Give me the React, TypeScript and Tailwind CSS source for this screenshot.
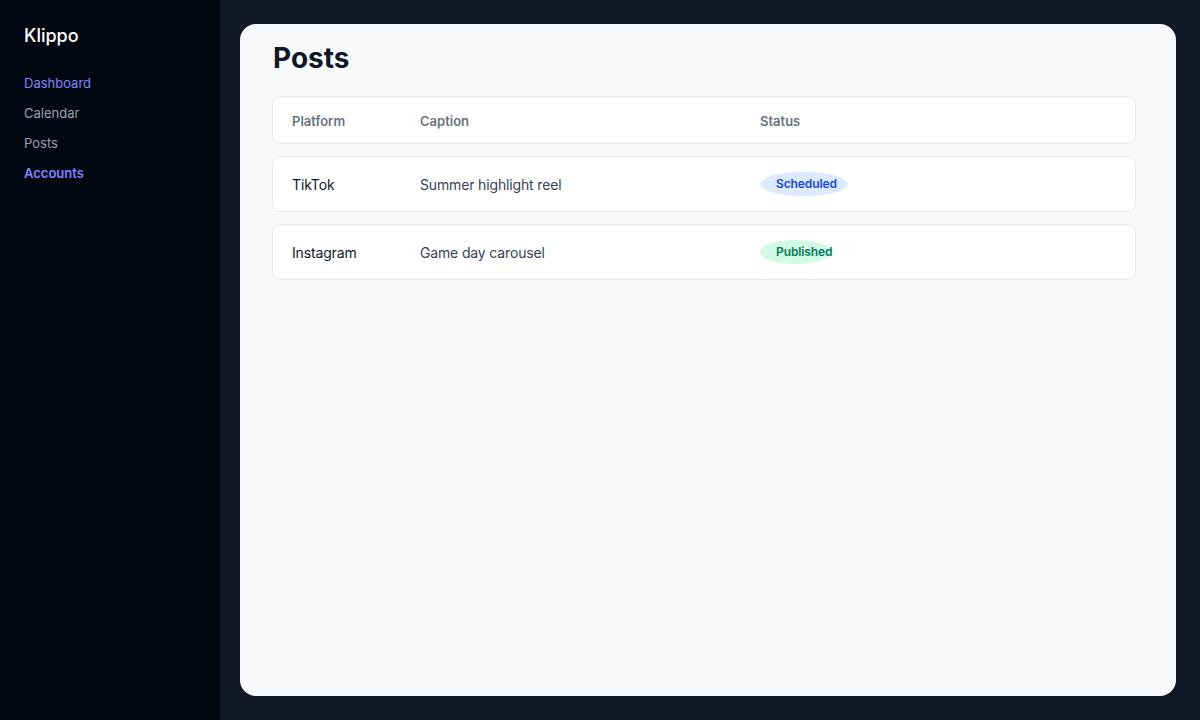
import React from "react";

interface Post {
  id: number;
  platform: string;
  caption: string;
  status: "Scheduled" | "Published";
}

const posts: Post[] = [
  { id: 1, platform: "TikTok", caption: "Summer highlight reel", status: "Scheduled" },
  { id: 2, platform: "Instagram", caption: "Game day carousel", status: "Published" },
];

const navItems = [
  { label: "Dashboard", className: "text-indigo-400" },
  { label: "Calendar", className: "text-gray-400" },
  { label: "Posts", className: "text-gray-400" },
  { label: "Accounts", className: "text-indigo-400 font-semibold" },
];

const StatusBadge: React.FC<{ status: Post["status"] }> = ({ status }) => {
  const styles =
    status === "Scheduled"
      ? "w-[88px] bg-blue-100 text-blue-700"
      : "w-[71px] bg-emerald-100 text-emerald-700";
  return (
    <span
      className={`inline-flex h-6 items-center whitespace-nowrap rounded-[50%] pl-4 text-xs font-semibold tracking-[-0.1px] ${styles}`}
    >
      {status}
    </span>
  );
};

const App: React.FC = () => {
  return (
    <div
      className="flex h-[720px] w-full bg-gray-900"
      style={{ fontFamily: "Inter, 'Noto Sans', sans-serif" }}
    >
      {/* Sidebar */}
      <aside className="w-[220px] shrink-0 bg-gray-950 px-6 pt-6">
        <div className="h-6 text-lg font-medium leading-6 text-white">Klippo</div>
        <nav className="mt-[25px] flex flex-col gap-[10px]">
          {navItems.map((item) => (
            <a key={item.label} className={`h-5 text-[13px] leading-5 ${item.className}`}>
              {item.label}
            </a>
          ))}
        </nav>
      </aside>

      {/* Main */}
      <main className="flex-1 pb-6 pl-5 pr-6 pt-6">
        <div className="h-full rounded-2xl bg-gray-50 pl-8 pr-10 pt-4">
          <h1 className="pl-px text-[28px] font-bold leading-9 text-gray-900">Posts</h1>

          <div className="mt-5 flex flex-col gap-3">
            <div className="grid h-12 grid-cols-[128px_340px_1fr] items-center rounded-lg border border-[#e8eaee] bg-white px-[19px] pt-1 text-[13px] font-semibold text-gray-500">
              <span>Platform</span>
              <span>Caption</span>
              <span>Status</span>
            </div>

            {posts.map((post) => (
              <div
                key={post.id}
                className="grid h-14 grid-cols-[128px_340px_1fr] items-center rounded-lg border border-[#e8eaee] bg-white px-[19px] text-sm tracking-[-0.15px]"
              >
                <span className="pt-0.5 text-gray-900">{post.platform}</span>
                <span className="pt-0.5 text-gray-700">{post.caption}</span>
                <span>
                  <StatusBadge status={post.status} />
                </span>
              </div>
            ))}
          </div>
        </div>
      </main>
    </div>
  );
};

export default App;
